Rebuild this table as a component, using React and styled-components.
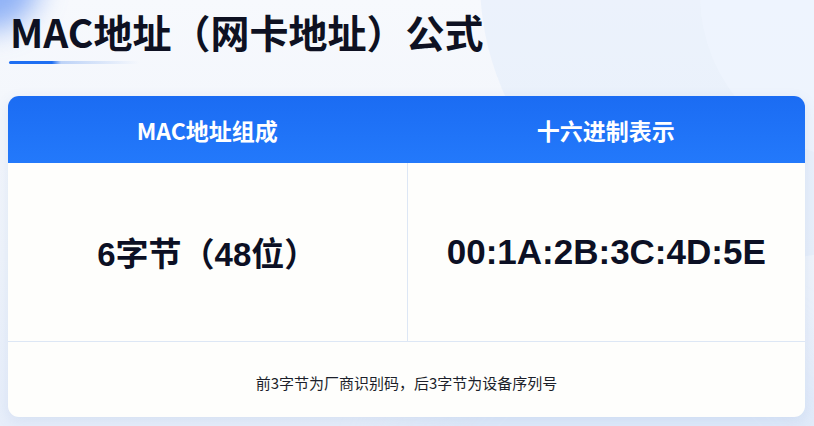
import React from "react";
import styled, { createGlobalStyle } from "styled-components";

const GlobalStyle = createGlobalStyle`
  html, body {
    margin: 0;
    padding: 0;
  }
  body {
    font-family: "Noto Sans CJK SC", "Noto Sans", sans-serif;
    background: #eef3fa;
  }
`;

const Page = styled.div`
  position: relative;
  width: 814px;
  height: 426px;
  overflow: hidden;
  box-sizing: border-box;
  padding: 8px 9px 0 8px;
  background: linear-gradient(180deg, #f7f9fd 0%, #eff4fb 60%, #e7eefa 100%);
`;

const Blob = styled.div`
  position: absolute;
  border-radius: 50%;
  left: ${(p) => p.x}px;
  top: ${(p) => p.y}px;
  width: ${(p) => p.size}px;
  height: ${(p) => p.size}px;
  background: ${(p) => p.bg};
  filter: blur(${(p) => p.blur || 0}px);
  pointer-events: none;
`;

const Content = styled.div`
  position: relative;
  z-index: 1;
  display: flex;
  flex-direction: column;
`;

const TitleBlock = styled.div`
  display: flex;
  flex-direction: column;
  padding-left: 2px;
  height: 88px;
`;

const Title = styled.h1`
  margin: 0;
  font-family: "Noto Sans CJK SC", sans-serif;
  font-size: 39px;
  font-weight: 700;
  line-height: 46px;
  color: #0e1122;
`;

const Underline = styled.div`
  margin-top: 7px;
  margin-left: -1px;
  width: 130px;
  height: 3px;
  border-radius: 2px;
  background: linear-gradient(
    90deg,
    #1f6ff2 0%,
    #1f6ff2 33%,
    rgba(120, 165, 240, 0.45) 40%,
    rgba(200, 220, 250, 0) 100%
  );
`;

const Card = styled.div`
  display: grid;
  grid-template-columns: 1fr 1fr;
  grid-template-rows: 67px 179px 75px;
  border-radius: 11px;
  overflow: hidden;
  background: #fefefc;
  box-shadow: 0 4px 14px rgba(80, 120, 190, 0.12);
`;

const HeadCell = styled.div`
  display: flex;
  align-items: center;
  justify-content: center;
  background: linear-gradient(180deg, #1b6cf3 0%, #2379fb 100%);
  color: #ffffff;
  font-size: 23px;
  font-weight: 700;
  font-family: "Noto Sans CJK SC", sans-serif;
`;

const ValueCell = styled.div`
  display: flex;
  align-items: center;
  justify-content: center;
  font-family: "Liberation Sans", "Noto Sans CJK SC", sans-serif;
  font-size: ${(p) => p.size}px;
  font-weight: 700;
  color: #0c1024;
  border-bottom: 1px solid #dde7f5;
  border-left: ${(p) => (p.divider ? "1px solid #dde7f5" : "none")};
`;

const Note = styled.div`
  grid-column: 1 / span 2;
  display: flex;
  align-items: center;
  justify-content: center;
  font-size: 15px;
  color: #1c1f2a;
  padding-top: 6px;
  font-family: "Noto Sans CJK SC", sans-serif;
`;

export default function App() {
  return (
    <>
      <GlobalStyle />
      <Page>
        <Blob x={-60} y={-70} size={100} bg="rgba(60,120,240,0.55)" blur={14} />
        <Blob x={480} y={-300} size={560} bg="rgba(220,232,250,0.4)" />
        <Blob x={700} y={-170} size={330} bg="rgba(240,246,255,0.55)" />
        <Blob x={380} y={300} size={500} bg="rgba(210,225,248,0.35)" blur={30} />
        <Content>
          <TitleBlock>
            <Title>MAC地址（网卡地址）公式</Title>
            <Underline />
          </TitleBlock>
          <Card>
            <HeadCell>MAC地址组成</HeadCell>
            <HeadCell>十六进制表示</HeadCell>
            <ValueCell size={33}>6字节（48位）</ValueCell>
            <ValueCell size={35} divider>
              00:1A:2B:3C:4D:5E
            </ValueCell>
            <Note>前3字节为厂商识别码，后3字节为设备序列号</Note>
          </Card>
        </Content>
      </Page>
    </>
  );
}
